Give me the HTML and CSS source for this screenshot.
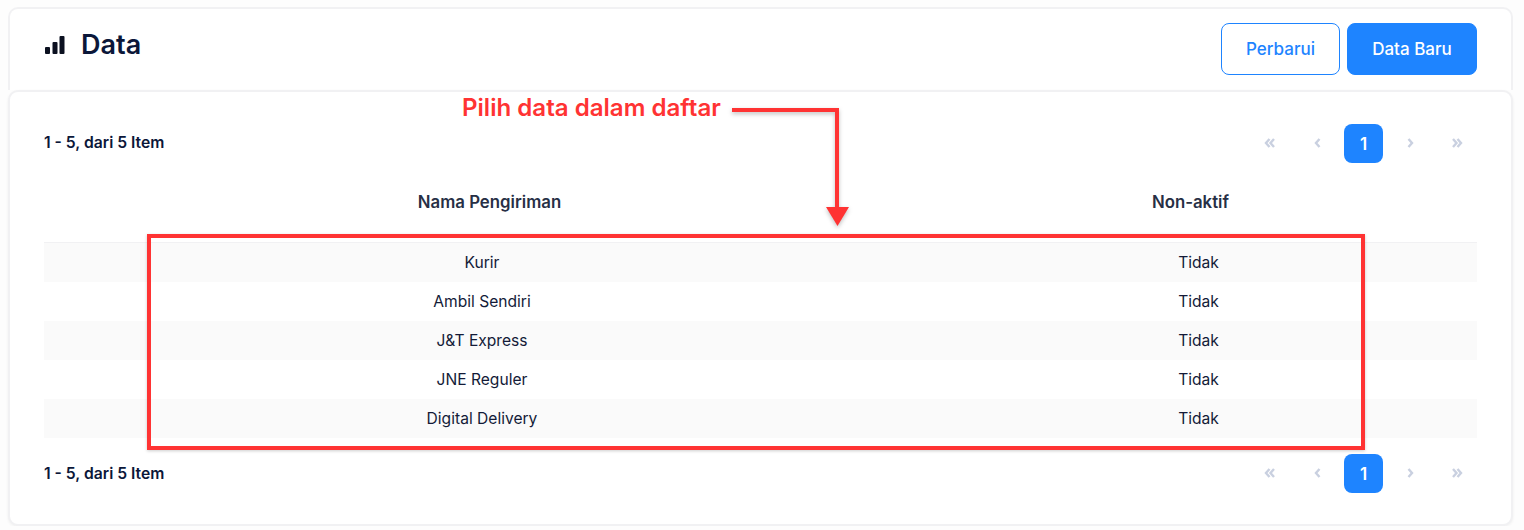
FILE: index.html
```html
<!doctype html>
<html>
<head>
    <title>Data</title>
    <meta charset="utf-8"/>
    <link rel="stylesheet" href="styles.css">
</head>
<body>
    <div class="card header-card">
        <div class="title">
            <svg class="title-icon" width="20" height="18" viewBox="0 0 20 18">
                <rect x="0" y="11" width="5" height="7" rx="1"/>
                <rect x="7.5" y="6" width="5" height="12" rx="1"/>
                <rect x="14.5" y="0" width="5" height="18" rx="1"/>
            </svg>
            <h1>Data</h1>
        </div>
        <div class="actions">
            <button class="btn btn-outline">Perbarui</button>
            <button class="btn btn-solid">Data Baru</button>
        </div>
    </div>

    <div class="card table-card">
        <div class="pager-row top">
            <span class="count">1 - 5, dari 5 Item</span>
            <div class="pager">
                <span class="page"><svg width="12" height="12" viewBox="0 1 12 12"><path d="M5.5 2 2 6l3.5 4M10 2 6.5 6l3.500 4"/></svg></span>
                <span class="page"><svg width="12" height="12" viewBox="-1 1 12 12"><path d="M7.500 2 4 6l3.500 4"/></svg></span>
                <span class="page current">1</span>
                <span class="page"><svg width="12" height="12" viewBox="1 1 12 12"><path d="M4.500 2 8 6l-3.500 4"/></svg></span>
                <span class="page"><svg width="12" height="12" viewBox="1 1 12 12"><path d="M2 2l3.500 4L2 10M6.500 2 10 6l-3.500 4"/></svg></span>
            </div>
        </div>

        <table>
            <thead>
                <tr><th class="col-name">Nama Pengiriman</th><th class="col-flag">Non-aktif</th></tr>
            </thead>
            <tbody>
                <tr><td>Kurir</td><td>Tidak</td></tr>
                <tr><td>Ambil Sendiri</td><td>Tidak</td></tr>
                <tr><td>J&amp;T Express</td><td>Tidak</td></tr>
                <tr><td>JNE Reguler</td><td>Tidak</td></tr>
                <tr><td>Digital Delivery</td><td>Tidak</td></tr>
            </tbody>
        </table>

        <div class="pager-row bottom">
            <span class="count">1 - 5, dari 5 Item</span>
            <div class="pager">
                <span class="page"><svg width="12" height="12" viewBox="0 1 12 12"><path d="M5.5 2 2 6l3.5 4M10 2 6.5 6l3.500 4"/></svg></span>
                <span class="page"><svg width="12" height="12" viewBox="-1 1 12 12"><path d="M7.500 2 4 6l3.500 4"/></svg></span>
                <span class="page current">1</span>
                <span class="page"><svg width="12" height="12" viewBox="1 1 12 12"><path d="M4.500 2 8 6l-3.500 4"/></svg></span>
                <span class="page"><svg width="12" height="12" viewBox="1 1 12 12"><path d="M2 2l3.500 4L2 10M6.500 2 10 6l-3.500 4"/></svg></span>
            </div>
        </div>
    </div>

    <!-- annotation drawn over the screenshot -->
    <div class="note">Pilih data dalam daftar</div>
    <svg class="note-arrow" width="130" height="125" viewBox="0 0 130 125">
        <path class="arrow-line" d="M3 5H108V105"/>
        <path class="arrow-head" d="M97 102H120L108.500 121Z"/>
    </svg>
    <div class="note-box"></div>
</body>
</html>
```

FILE: styles.css
```css
* {
    box-sizing: border-box;
}
body {
    margin: 0;
    padding: 7px 11px 0 8px;
    background-color: #fdfdfd;
    font-family: Inter, sans-serif;
    color: #0b1739;
}
.card {
    background-color: white;
    border: 2px solid #f1f1f3;
    border-radius: 10px;
    box-shadow: 0 1px 3px rgba(0, 0, 0, 0.06);
}
.header-card {
    display: flex;
    justify-content: space-between;
    align-items: flex-start;
    height: 83px;
    padding: 14px 34px 0 35px;
    border-bottom: 0;
    border-bottom-left-radius: 0;
    border-bottom-right-radius: 0;
    box-shadow: none;
}
.title {
    display: flex;
    align-items: center;
    gap: 16px;
    margin-top: 5px;
}
.title-icon {
    fill: #0b1020;
}
h1 {
    margin: 0;
    font-size: 27px;
    font-weight: 600;
    line-height: 34px;
}
.actions {
    display: flex;
    gap: 7px;
}
.btn {
    height: 52px;
    border-radius: 8px;
    font-family: Inter, sans-serif;
    font-size: 17px;
    font-weight: 500;
    border: 1px solid #1e84ff;
}
.btn-outline {
    width: 119px;
    background-color: white;
    color: #1e84ff;
}
.btn-solid {
    width: 130px;
    background-color: #1e84ff;
    color: white;
}
.table-card {
    height: 436px;
    padding: 0 34px;
}
.pager-row {
    display: flex;
    justify-content: space-between;
    align-items: center;
}
.pager-row.top {
    margin-top: 32px;
}
.pager-row.top .count {
    margin-bottom: 2px;
}
.pager-row.bottom {
    margin-top: 16px;
}
.count {
    font-size: 15.7px;
    font-weight: 600;
}
.pager {
    display: flex;
    gap: 8px;
}
.page {
    display: flex;
    align-items: center;
    justify-content: center;
    width: 39px;
    height: 39px;
    border-radius: 8px;
}
.page svg {
    fill: none;
    stroke: #c9d0e0;
    stroke-width: 2.4;
}
.page.current {
    background-color: #1e84ff;
    color: white;
    font-size: 17px;
    font-weight: 600;
}
table {
    width: 100%;
    margin-top: 19px;
    border-spacing: 0;
    table-layout: fixed;
}
th {
    height: 61px;
    padding: 0 0 20px;
    font-size: 16.8px;
    font-weight: 600;
    color: #272f45;
    border-bottom: 1px solid #f1f1f3;
}
.col-name {
    width: 61.13%;
    padding-left: 15px;
}
.col-flag {
    padding-right: 16px;
}
td {
    height: 39px;
    padding: 0;
    text-align: center;
    font-size: 15.6px;
    color: #131b38;
}
tbody tr:nth-child(odd) {
    background-color: #fafafa;
}
.note {
    position: absolute;
    left: 462px;
    top: 94px;
    font-size: 24.1px;
    font-weight: 600;
    line-height: 28px;
    color: #ff3333;
}
.note-arrow {
    position: absolute;
    left: 729px;
    top: 105px;
    filter: drop-shadow(0 2px 2px rgba(0, 0, 0, 0.25));
}
.arrow-line {
    fill: none;
    stroke: #ff3333;
    stroke-width: 4;
}
.arrow-head {
    fill: #ff3333;
}
.note-box {
    position: absolute;
    left: 147px;
    top: 234px;
    width: 1218px;
    height: 216px;
    border: 4px solid #ff3333;
    box-shadow: 0 1px 3px rgba(0, 0, 0, 0.2);
}
```
